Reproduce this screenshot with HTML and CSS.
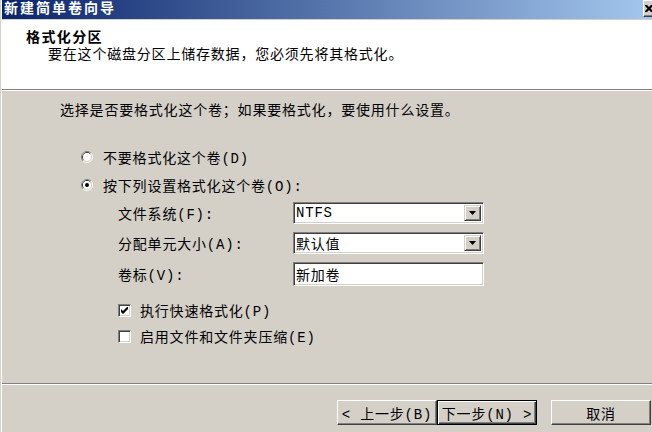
FILE: index.html
```html
<!DOCTYPE html>
<html lang="zh-CN">
<head>
    <meta charset="UTF-8">
    <title>新建简单卷向导</title>
    <link rel="stylesheet" href="styles.css">
</head>
<body>

    <div class="window">
        <div class="frame">

            <!-- Title bar -->
            <div class="titlebar">
                <span class="title">新建简单卷向导</span>
                <span class="close-btn">
                    <svg width="8" height="7" viewBox="0 0 8 7">
                        <path d="M0 0h2l2 2 2-2h2v1l-2.5 2.5L8 6v1H6L4 5 2 7H0V6l2.5-2.5L0 1z" fill="#000"/>
                    </svg>
                </span>
            </div>

            <!-- Wizard header -->
            <div class="header">
                <div class="header-title">格式化分区</div>
                <div class="header-sub">要在这个磁盘分区上储存数据，您必须先将其格式化。</div>
            </div>
            <div class="rule"></div>

            <!-- Page content -->
            <div class="content">
                <p class="intro">选择是否要格式化这个卷；如果要格式化，要使用什么设置。</p>

                <div class="options">
                    <div class="radio-row">
                        <svg class="radio" width="12" height="12" viewBox="0 0 12 12">
                            <path d="M2.11 9.89A5.5 5.5 0 0 1 9.89 2.11" stroke="#808080" fill="none"/>
                            <path d="M9.89 2.11A5.5 5.5 0 0 1 2.11 9.89" stroke="#fff" fill="none"/>
                            <path d="M2.82 9.18A4.5 4.5 0 0 1 9.18 2.82" stroke="#404040" fill="none"/>
                            <path d="M9.18 2.82A4.5 4.5 0 0 1 2.82 9.18" stroke="#d4d0c8" fill="none"/>
                            <circle cx="6" cy="6" r="4" fill="#fff"/>
                        </svg>
                        <span>不要格式化这个卷(D)</span>
                    </div>
                    <div class="radio-row second">
                        <svg class="radio" width="12" height="12" viewBox="0 0 12 12">
                            <path d="M2.11 9.89A5.5 5.5 0 0 1 9.89 2.11" stroke="#808080" fill="none"/>
                            <path d="M9.89 2.11A5.5 5.5 0 0 1 2.11 9.89" stroke="#fff" fill="none"/>
                            <path d="M2.82 9.18A4.5 4.5 0 0 1 9.18 2.82" stroke="#404040" fill="none"/>
                            <path d="M9.18 2.82A4.5 4.5 0 0 1 2.82 9.18" stroke="#d4d0c8" fill="none"/>
                            <circle cx="6" cy="6" r="4" fill="#fff"/>
                            <circle cx="6" cy="6" r="2" fill="#000"/>
                        </svg>
                        <span>按下列设置格式化这个卷(O):</span>
                    </div>

                    <div class="settings">
                        <div class="field-grid">
                            <span class="field-label">文件系统(F):</span>
                            <div class="combo">
                                <span class="combo-value">NTFS</span>
                                <span class="drop-btn">
                                    <svg width="7" height="4" viewBox="0 0 7 4"><path d="M0 0h7L3.5 4z" fill="#000"/></svg>
                                </span>
                            </div>

                            <span class="field-label">分配单元大小(A):</span>
                            <div class="combo">
                                <span class="combo-value">默认值</span>
                                <span class="drop-btn">
                                    <svg width="7" height="4" viewBox="0 0 7 4"><path d="M0 0h7L3.5 4z" fill="#000"/></svg>
                                </span>
                            </div>

                            <span class="field-label">卷标(V):</span>
                            <div class="edit">新加卷</div>
                        </div>

                        <div class="checks">
                            <div class="check-row">
                                <span class="checkbox">
                                    <svg width="7" height="7" viewBox="0 0 7 7">
                                        <path d="M0 2v3l2 2 5-5V-1L2 4z" fill="#000"/>
                                    </svg>
                                </span>
                                <span>执行快速格式化(P)</span>
                            </div>
                            <div class="check-row">
                                <span class="checkbox"></span>
                                <span>启用文件和文件夹压缩(E)</span>
                            </div>
                        </div>
                    </div>
                </div>
            </div>
            <div class="rule"></div>

            <!-- Buttons -->
            <div class="footer">
                <button class="btn">&lt; 上一步(B)</button>
                <button class="btn btn-default">下一步(N) &gt;</button>
                <button class="btn btn-cancel">取消</button>
            </div>

        </div>
    </div>

</body>
</html>
```

FILE: styles.css
```css
body {
    margin: 0;
    overflow: hidden;
    background-color: #d4d0c8;
    font-family: "Liberation Mono", "Noto Sans CJK SC", monospace;
    font-size: 14px;
    letter-spacing: 0.8px;
    color: #000;
}

.window {
    width: 664px;
    height: 432px;
    box-sizing: border-box;
    border-left: 1px solid #d4d0c8;
}

.frame {
    height: 100%;
    border-left: 1px solid #fff;
    background-color: #d4d0c8;
}

/* Title bar */
.titlebar {
    display: flex;
    justify-content: space-between;
    align-items: flex-start;
    height: 19px;
    padding-right: 5px;
    background: linear-gradient(to right, #0a246a, #a6caf0);
    border-bottom: 1px solid #d4d0c8;
}

.title {
    padding-left: 2px;
    line-height: 19px;
    color: #fff;
    font-weight: bold;
    letter-spacing: 2px;
}

.close-btn {
    display: flex;
    align-items: center;
    width: 16px;
    height: 17px;
    box-sizing: border-box;
    padding-left: 1px;
    background-color: #d4d0c8;
    border: 1px solid;
    border-color: #fff #404040 #404040 #fff;
    box-shadow: inset -1px -1px #808080;
}

/* Header */
.header {
    height: 69px;
    box-sizing: border-box;
    padding: 10px 0 0 24px;
    background-color: #fff;
}

.header-title {
    line-height: 17px;
    font-weight: bold;
    letter-spacing: 1.4px;
}

.header-sub {
    line-height: 17px;
    padding-left: 22px;
}

.rule {
    border-top: 1px solid #808080;
    border-bottom: 1px solid #fff;
}

/* Content */
.content {
    height: 292px;
    box-sizing: border-box;
    padding: 12px 0 0 58px;
}

.intro {
    margin: 0;
    line-height: 17px;
}

.options {
    margin-top: 27px;
    margin-left: 21px;
}

.radio-row {
    display: flex;
    align-items: center;
    gap: 10px;
    height: 20px;
}

.radio-row.second {
    margin-top: 8px;
}

.settings {
    margin-top: 7px;
    margin-left: 37px;
}

.field-grid {
    display: grid;
    grid-template-columns: 175px 191px;
    grid-template-rows: 22px 22px 24px;
    row-gap: 8px;
    align-items: center;
}

.combo,
.edit {
    display: flex;
    align-items: center;
    height: 100%;
    box-sizing: border-box;
    background-color: #fff;
    border: 1px solid;
    border-color: #808080 #fff #fff #808080;
    box-shadow: inset 1px 1px #404040, inset -1px -1px #d4d0c8;
    padding: 2px;
}

.combo-value {
    flex: 1;
}

.drop-btn {
    display: flex;
    align-items: center;
    justify-content: center;
    width: 17px;
    height: 100%;
    box-sizing: border-box;
    background-color: #d4d0c8;
    border: 1px solid;
    border-color: #d4d0c8 #404040 #404040 #d4d0c8;
    box-shadow: inset 1px 1px #fff, inset -1px -1px #808080;
}

.checks {
    margin-top: 14px;
    display: flex;
    flex-direction: column;
    gap: 6px;
}

.check-row {
    display: flex;
    align-items: center;
    gap: 9px;
    height: 20px;
}

.checkbox {
    display: flex;
    align-items: center;
    justify-content: center;
    width: 13px;
    height: 13px;
    box-sizing: border-box;
    background-color: #fff;
    border: 1px solid;
    border-color: #808080 #fff #fff #808080;
    box-shadow: inset 1px 1px #404040, inset -1px -1px #d4d0c8;
}

/* Footer buttons */
.footer {
    display: flex;
    justify-content: flex-end;
    padding: 15px 13px 0 0;
}

.btn {
    width: 100px;
    height: 25px;
    box-sizing: border-box;
    padding: 0;
    font-family: inherit;
    font-size: 14px;
    letter-spacing: 0.8px;
    color: #000;
    background-color: #d4d0c8;
    border: 1px solid;
    border-color: #fff #404040 #404040 #fff;
    box-shadow: inset -1px -1px #808080;
}

.btn-default {
    border-color: #000;
    box-shadow: inset 1px 1px #fff, inset -1px -1px #404040, inset -2px -2px #808080;
}

.btn-cancel {
    margin-left: 14px;
}
```
